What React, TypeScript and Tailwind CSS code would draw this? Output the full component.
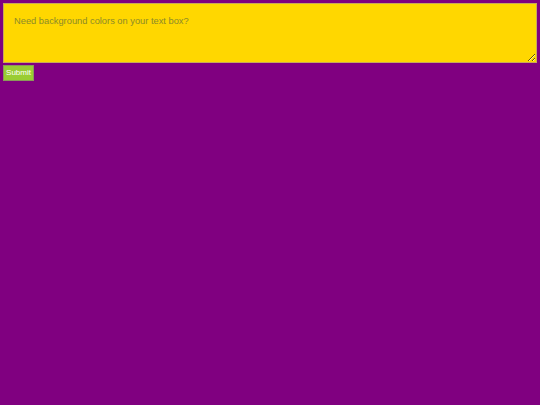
export default function App() {
  return (
    <div className="min-h-[405px] bg-[#800080] p-[3px] font-['Liberation_Sans',Arial,sans-serif]">
      <form className="flex flex-col items-start gap-[2px]">
        <textarea
          placeholder="Need background colors on your text box?"
          className="block h-[60px] w-[534px] border border-[#c9a85a] bg-[#ffd700] px-[10px] pt-[11px] pb-[10px] text-[9.3px] leading-[12px] text-black placeholder:text-[#8c8a2a] outline-none"
        />
        <button
          type="button"
          className="h-[16px] w-[31px] border border-[#8a9a5a] bg-[#9acd32] p-0 text-[8px] leading-[14px] text-white"
        >
          Submit
        </button>
      </form>
    </div>
  );
}
